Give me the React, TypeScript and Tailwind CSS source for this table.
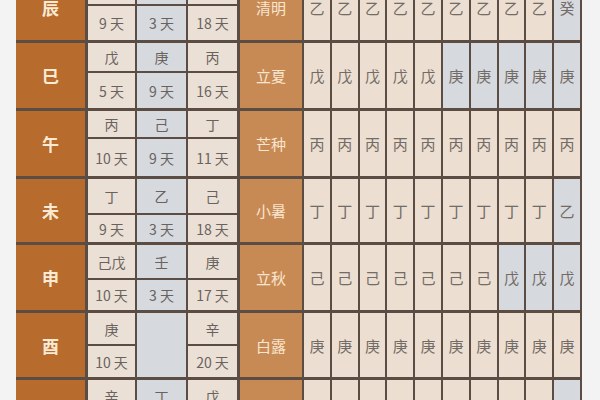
import React from 'react';

type Row = {
  branch: string;
  jq: string;
  top: [string, string, string];
  bottom: [string, string, string];
  small: string[];
  blue: number; // count of blue cells at right end
  h1: number;
  h2: number;
  mergeMid?: boolean;
};

const rows: Row[] = [
  { branch: '辰', jq: '清明', top: ['乙', '癸', '戊'], bottom: ['9 天', '3 天', '18 天'], small: ['乙','乙','乙','乙','乙','乙','乙','乙','乙','癸'], blue: 1, h1: 30, h2: 34 },
  { branch: '巳', jq: '立夏', top: ['戊', '庚', '丙'], bottom: ['5 天', '9 天', '16 天'], small: ['戊','戊','戊','戊','戊','庚','庚','庚','庚','庚'], blue: 5, h1: 28, h2: 35 },
  { branch: '午', jq: '芒种', top: ['丙', '己', '丁'], bottom: ['10 天', '9 天', '11 天'], small: ['丙','丙','丙','丙','丙','丙','丙','丙','丙','丙'], blue: 0, h1: 26, h2: 37 },
  { branch: '未', jq: '小暑', top: ['丁', '乙', '己'], bottom: ['9 天', '3 天', '18 天'], small: ['丁','丁','丁','丁','丁','丁','丁','丁','丁','乙'], blue: 1, h1: 34, h2: 27 },
  { branch: '申', jq: '立秋', top: ['己戊', '壬', '庚'], bottom: ['10 天', '3 天', '17 天'], small: ['己','己','己','己','己','己','己','戊','戊','戊'], blue: 3, h1: 33, h2: 30 },
  { branch: '酉', jq: '白露', top: ['庚', '', '辛'], bottom: ['10 天', '', '20 天'], small: ['庚','庚','庚','庚','庚','庚','庚','庚','庚','庚'], blue: 0, h1: 31, h2: 31, mergeMid: true },
  { branch: '戌', jq: '寒露', top: ['辛', '丁', '戊'], bottom: ['9 天', '3 天', '18 天'], small: ['辛','辛','辛','辛','辛','辛','辛','辛','辛','丁'], blue: 1, h1: 32, h2: 32 },
];

const colWidths = ['w-[47px]', 'w-[49px]', 'w-[49px]'];
const colBg = ['bg-[#eae0d6]', 'bg-[#d6d9de]', 'bg-[#eae0d6]'];
const colMl = ['', 'ml-[2px]', 'ml-[2px]'];

function TableRow({ r }: { r: Row }) {
  return (
    <div className="flex w-fit bg-[#5b4d43] pb-[3px] pr-[2px]">
      <div className="w-[69px] shrink-0 bg-[#b76b2c] flex items-center justify-center text-[17px] font-bold text-[#fbead4]">
        {r.branch}
      </div>
      <div className="ml-[3px] flex">
        {[0, 1, 2].map((c) =>
          c === 1 && r.mergeMid ? (
            <div key={c} className={`${colWidths[c]} ${colMl[c]} ${colBg[c]}`} />
          ) : (
            <div key={c} className={`${colWidths[c]} ${colMl[c]} flex flex-col`}>
              <div
                className={`${colBg[c]} flex items-center justify-center text-[14px] text-[#6a625d]`}
                style={{ height: r.h1 }}
              >
                {r.top[c]}
              </div>
              <div
                className={`${colBg[c]} mt-[2px] flex items-center justify-center text-[14px] text-[#6a625d]`}
                style={{ height: r.h2 }}
              >
                {r.bottom[c]}
              </div>
            </div>
          )
        )}
      </div>
      <div className="ml-[3px] w-[62px] bg-[#c88a55] flex items-center justify-center text-[15px] text-[#f8e6d0]">
        {r.jq}
      </div>
      <div className="ml-[2px] flex gap-[2px]">
        {r.small.map((s, i) => (
          <div
            key={i}
            className={`w-[25.8px] flex items-center justify-center text-[15px] text-[#736b66] ${
              i >= 10 - r.blue ? 'bg-[#d6d9de]' : 'bg-[#ecdfd1]'
            }`}
          >
            {s}
          </div>
        ))}
      </div>
    </div>
  );
}

export default function App() {
  return (
    <div className="w-[600px] h-[400px] overflow-hidden bg-[#f3f3f3] font-['Noto_Sans_CJK_SC','Noto_Sans',sans-serif] leading-none">
      <div className="ml-[16px] mt-[-26px] flex flex-col">
        {rows.map((r, i) => (
          <TableRow key={i} r={r} />
        ))}
      </div>
    </div>
  );
}
